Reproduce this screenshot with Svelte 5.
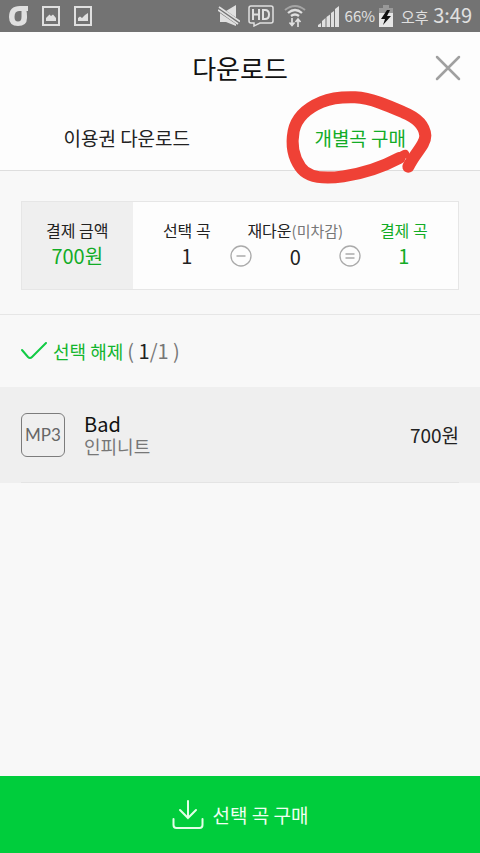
<script lang="ts">
	let tab = $state('single');

	const tabs = [
		{ id: 'pass', label: '이용권 다운로드' },
		{ id: 'single', label: '개별곡 구매' }
	];

	const songs = [{ title: 'Bad', artist: '인피니트', price: '700원' }];
</script>

<div class="screen">
	<div class="status">
		<div class="notices">
			<svg width="20" height="20" viewBox="0 0 20 20">
				<path
					fill="#e0e0e0"
					fill-rule="evenodd"
					d="M20 0V5H18.500Q19 7 19 10V12Q19 20 10 20Q1 20 1 11Q1 0 12 0ZM11 5Q6.500 5 6.500 11Q6.500 15.500 10 15.500Q13.500 15.500 13.500 11V5Z"
				/>
			</svg>
			<svg width="18" height="20" viewBox="0 0 18 20" fill="none">
				<rect x="1" y="1" width="16" height="18" stroke="#e0e0e0" stroke-width="2" />
				<path d="M4 15V12L6 10L7.500 8.500L9 10L11 8.500L14 12V15Z" fill="#e0e0e0" />
			</svg>
			<svg width="18" height="20" viewBox="0 0 18 20" fill="none">
				<rect x="1" y="1" width="16" height="18" stroke="#e0e0e0" stroke-width="2" />
				<path d="M4 15V12L6 10.500L8 12L11 9L14 7V15Z" fill="#e0e0e0" />
			</svg>
		</div>
		<div class="system">
			<svg width="22" height="22" viewBox="0 0 22 22" fill="none">
				<path d="M2 6H8L18 0V21L8 17H2Z" fill="#e0e0e0" />
				<path d="M0 3.500L22 18.500" stroke="#737373" stroke-width="5.500" />
				<path d="M1 2L22 16.500M0 5L20 19" stroke="#e0e0e0" stroke-width="1.800" />
			</svg>
			<svg class="hd" width="26" height="22" viewBox="0 0 26 22" fill="none" stroke="#e0e0e0">
				<path
					d="M3 1H23Q25 1 25 3V16Q25 18 23 18H12L6 21V18H3Q1 18 1 16V3Q1 1 3 1Z"
					stroke-width="1.500"
				/>
				<path d="M5 4V15M11 4V15M5 9.500H11M15 5V14H17Q21 14 21 9.500T17 5Z" stroke-width="2" />
			</svg>
			<svg class="wifi" width="22" height="24" viewBox="0 0 22 24" fill="none" stroke="#e0e0e0">
				<path d="M1 6Q11 -2 21 6" stroke="#a5a5a5" stroke-width="2" />
				<path d="M4 9Q11 3 18 9M7 12Q11 9 15 12" stroke-width="2.300" />
				<path
					d="M8 14V21M5.500 18.500L8 21.500L10.500 18.500M14 23V15M11.500 18L14 15L16.500 18"
					stroke-width="1.700"
				/>
			</svg>
			<svg class="signal" width="21" height="21" viewBox="0 0 21 21" fill="#e0e0e0">
				<path d="M0 21V19L3 17V21ZM4 21V15L7.500 12V21ZM8.500 21V11L12 8.500V21ZM13 21V7L16 5V21ZM17 21V3L21 0V21Z" />
			</svg>
			<span class="percent">66%</span>
			<svg class="battery" width="14" height="22" viewBox="0 0 14 22">
				<path d="M4 0H10V3H14V9H0V3H4Z" fill="#999" />
				<path d="M0 8H14V22H0Z" fill="#e6e6e6" />
				<path d="M8 5L2 14H6L4 20L12 11H8L11 5Z" fill="#111" />
			</svg>
			<span class="clock"><small>오후</small> 3:49</span>
		</div>
	</div>

	<header>
		<h1>다운로드</h1>
		<button class="close" aria-label="닫기">
			<svg width="28" height="28" viewBox="0 0 28 28" fill="none">
				<path d="M3 3L25 25M25 3L3 25" stroke="#a0a0a0" stroke-width="2.500" stroke-linecap="round" />
			</svg>
		</button>
	</header>

	<nav>
		{#each tabs as t (t.id)}
			<button class={['tab', tab === t.id && 'active']} onclick={() => (tab = t.id)}>
				{t.label}
				{#if t.id === 'single'}
					<svg class="marker" width="180" height="105" viewBox="0 0 540 315" fill="none">
						<g stroke="#ef4136" stroke-linecap="round" stroke-linejoin="round">
							<path d="M405 207C360 232 325 247 285 259" stroke-width="26" />
							<path
								d="M388 219C330 250 275 266 220 274C165 282 112 278 91 246C70 216 63 180 71 138C80 95 110 70 155 51C185 38 220 36 255 37C305 40 355 62 400 82C445 100 464 126 466 152C466 180 435 203 415 245"
								stroke-width="36"
							/>
						</g>
					</svg>
				{/if}
			</button>
		{/each}
	</nav>

	<section class="summary">
		<div class="box">
			<div class="cell total">
				<span class="label">결제 금액</span>
				<span class="value green">700원</span>
			</div>
			<div class="cell">
				<span class="label">선택 곡</span>
				<span class="value">1</span>
				<svg class="sign" width="22" height="22" viewBox="0 0 22 22" fill="none" stroke="#aaa">
					<circle cx="11" cy="11" r="10" stroke-width="1.300" />
					<path d="M6.500 11H15.500" stroke-width="1.500" />
				</svg>
			</div>
			<div class="cell">
				<span class="label">재다운<small>(미차감)</small></span>
				<span class="value">0</span>
				<svg class="sign" width="22" height="22" viewBox="0 0 22 22" fill="none" stroke="#aaa">
					<circle cx="11" cy="11" r="10" stroke-width="1.300" />
					<path d="M6.500 9H15.500M6.500 13H15.500" stroke-width="1.500" />
				</svg>
			</div>
			<div class="cell green">
				<span class="label">결제 곡</span>
				<span class="value">1</span>
			</div>
		</div>
	</section>

	<div class="select">
		<button class="toggle">
			<svg width="26" height="18" viewBox="0 0 26 18" fill="none">
				<path
					d="M1 8L7 15Q9 17 11 15L25 1"
					stroke="#12cb45"
					stroke-width="2"
					stroke-linecap="round"
				/>
			</svg>
			선택 해제
		</button>
		<span class="count">( <b>1</b>/1 )</span>
	</div>

	<ul>
		{#each songs as song}
			<li>
				<div class="row">
					<span class="format">MP3</span>
					<div class="info">
						<span class="title">{song.title}</span>
						<span class="artist">{song.artist}</span>
					</div>
					<span class="price">{song.price}</span>
				</div>
			</li>
		{/each}
	</ul>

	<button class="buy">
		<svg width="32" height="30" viewBox="0 0 32 30" fill="none">
			<path
				d="M16 1V18M8 10L16 18L24 10M1.500 19V25Q1.500 28 4.500 28H27.500Q30.500 28 30.500 25V19"
				stroke="#e2ffe8"
				stroke-width="2"
				stroke-linecap="round"
			/>
		</svg>
		선택 곡 구매
	</button>
</div>

<style>
	:global(body) {
		margin: 0;
		background: #f8f8f8;
	}

	.screen {
		display: flex;
		flex-direction: column;
		min-height: 100vh;
		font-family: 'Noto Sans CJK KR', sans-serif;
		color: #222;
	}

	button {
		padding: 0;
		border: 0;
		background: none;
		font: inherit;
		color: inherit;
		cursor: pointer;
	}

	svg {
		display: block;
		flex: none;
	}

	.status {
		display: flex;
		justify-content: space-between;
		align-items: center;
		height: 32px;
		padding: 0 8px;
		background: #737373;
		color: #e0e0e0;
	}

	.notices {
		display: flex;
		align-items: center;
		gap: 14px;
	}

	.system {
		display: flex;
		align-items: center;
		line-height: 32px;
	}

	.hd {
		margin-left: 8px;
	}

	.wifi {
		margin: 0 12px 0 10px;
	}

	.percent {
		margin: 0 4px 0 6px;
		font-size: 15px;
	}

	.clock {
		margin-left: 8px;
		font-size: 20px;
	}

	.clock small {
		font-size: 15px;
	}

	header {
		display: grid;
		grid-template-columns: 1fr auto 1fr;
		align-items: center;
		height: 72px;
		padding: 0 18px;
		background: #fdfdfd;
	}

	h1 {
		grid-column: 2;
		margin: 0;
		font-size: 26px;
		font-weight: 400;
		line-height: 38px;
		color: #111;
	}

	.close {
		justify-self: end;
	}

	nav {
		display: flex;
		height: 66px;
		padding: 0 3px 0 10px;
		border-bottom: 1px solid #dedede;
		background: #fdfdfd;
	}

	.tab {
		position: relative;
		flex: 1;
		font-size: 19px;
	}

	.tab.active {
		color: #12ac26;
	}

	.marker {
		position: absolute;
		top: -19px;
		left: calc(50% - 90px);
		pointer-events: none;
	}

	.summary {
		padding: 30px 21px 24px;
		border-bottom: 1px solid #e6e6e6;
	}

	.box {
		display: grid;
		grid-template-columns: 110fr 108fr 108fr 108fr;
		border: 1px solid #e6e6e6;
		background: #fdfdfd;
	}

	.cell {
		position: relative;
		display: flex;
		flex-direction: column;
		align-items: center;
		padding: 15px 0 19px;
		line-height: 26px;
		white-space: nowrap;
	}

	.total {
		background: #efefef;
	}

	.label {
		font-size: 16px;
	}

	.label small {
		font-size: 15px;
		color: #777;
	}

	.value {
		font-size: 20px;
	}

	.green {
		color: #12ac26;
	}

	.sign {
		position: absolute;
		right: -11px;
		bottom: 22px;
	}

	.select {
		display: flex;
		align-items: center;
		gap: 4px;
		height: 72px;
		padding: 0 21px;
		font-size: 18px;
	}

	.toggle {
		display: flex;
		align-items: center;
		gap: 6px;
		color: #12b52d;
	}

	.count {
		font-size: 20px;
		line-height: 26px;
		color: #777;
	}

	.count b {
		font-weight: 400;
		color: #222;
	}

	ul {
		flex: 1;
		margin: 0;
		padding: 0;
		list-style: none;
	}

	li {
		padding: 0 21px;
		background: #efefef;
	}

	.row {
		display: flex;
		align-items: center;
		height: 95px;
		border-bottom: 1px solid #e4e4e4;
	}

	.format {
		display: grid;
		place-items: center;
		box-sizing: border-box;
		width: 44px;
		height: 44px;
		border: 1px solid #7c7c7c;
		border-radius: 6px;
		font-family: Lato, sans-serif;
		font-size: 17px;
		line-height: 20px;
		color: #666;
	}

	.info {
		display: flex;
		flex: 1;
		flex-direction: column;
		margin-left: 19px;
		line-height: 23px;
	}

	.title {
		font-size: 20px;
		color: #111;
	}

	.artist {
		font-size: 18px;
		color: #777;
	}

	.price {
		font-size: 19px;
		line-height: 24px;
	}

	.buy {
		display: flex;
		justify-content: center;
		align-items: center;
		gap: 9px;
		height: 77px;
		background: #00cd3c;
		font-size: 19px;
		color: #f0fff2;
	}
</style>
